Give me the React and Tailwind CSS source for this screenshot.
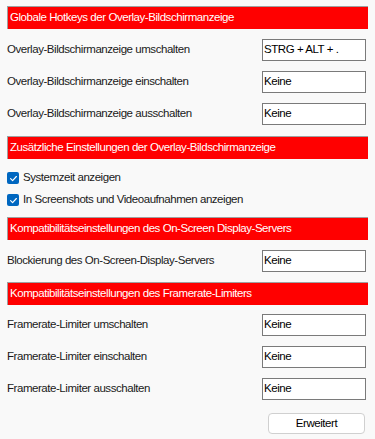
import React from 'react';

const SectionHeader = ({ title, className = '' }) => (
    <div className={`h-[23px] mx-[7px] bg-[#ff0000] border-t border-l border-[#a0a0a0] flex items-center pl-[2px] text-white ${className}`}>
        {title}
    </div>
);

const HotkeyRow = ({ label, value, className = '' }) => (
    <div className={`flex items-center justify-between pl-[7px] pr-[9px] h-[22px] ${className}`}>
        <span>{label}</span>
        <div className="w-[104px] h-[22px] bg-white border border-[#7a7a7a] pl-[1px] leading-[18px] text-black">
            {value}
        </div>
    </div>
);

const CheckRow = ({ label }) => (
    <div className="flex items-center h-[22px] pl-[7px] gap-[4px]">
        <div className="w-[12px] h-[12px] rounded-[2px] bg-[#0067c0] flex items-center justify-center">
            <svg className="w-[9px] h-[9px]" viewBox="0 0 10 10" fill="none" stroke="white" strokeWidth={1.3} strokeLinecap="round" strokeLinejoin="round">
                <path d="M1.8 5.2 L4 7.3 L8.2 2.8" />
            </svg>
        </div>
        <span>{label}</span>
    </div>
);

export default function App() {
    return (
        <div className="w-[375px] h-[439px] bg-[#f9f9f9] text-[11.5px] tracking-[-0.45px] text-[#1a1a1a] overflow-hidden pt-[6px]" style={{ fontFamily: '"Liberation Sans", Arial, sans-serif' }}>
            <SectionHeader title="Globale Hotkeys der Overlay-Bildschirmanzeige" />
            <HotkeyRow className="mt-[10px]" label="Overlay-Bildschirmanzeige umschalten" value="STRG + ALT + ." />
            <HotkeyRow className="mt-[10px]" label="Overlay-Bildschirmanzeige einschalten" value="Keine" />
            <HotkeyRow className="mt-[10px]" label="Overlay-Bildschirmanzeige ausschalten" value="Keine" />

            <SectionHeader className="mt-[11px]" title="Zusätzliche Einstellungen der Overlay-Bildschirmanzeige" />
            <div className="mt-[8px]">
                <CheckRow label="Systemzeit anzeigen" />
                <CheckRow label="In Screenshots und Videoaufnahmen anzeigen" />
            </div>

            <SectionHeader className="mt-[6px]" title="Kompatibilitätseinstellungen des On-Screen Display-Servers" />
            <HotkeyRow className="mt-[10px]" label="Blockierung des On-Screen-Display-Servers" value="Keine" />

            <SectionHeader className="mt-[10px]" title="Kompatibilitätseinstellungen des Framerate-Limiters" />
            <HotkeyRow className="mt-[9px]" label="Framerate-Limiter umschalten" value="Keine" />
            <HotkeyRow className="mt-[10px]" label="Framerate-Limiter einschalten" value="Keine" />
            <HotkeyRow className="mt-[10px]" label="Framerate-Limiter ausschalten" value="Keine" />

            <div className="flex justify-end pr-[10px] mt-[13px]">
                <button className="w-[97px] h-[21px] bg-white border border-[#d0d0d0] rounded-[4px] text-[11.5px] tracking-[-0.45px] text-black leading-none">
                    Erweitert
                </button>
            </div>
        </div>
    );
}
